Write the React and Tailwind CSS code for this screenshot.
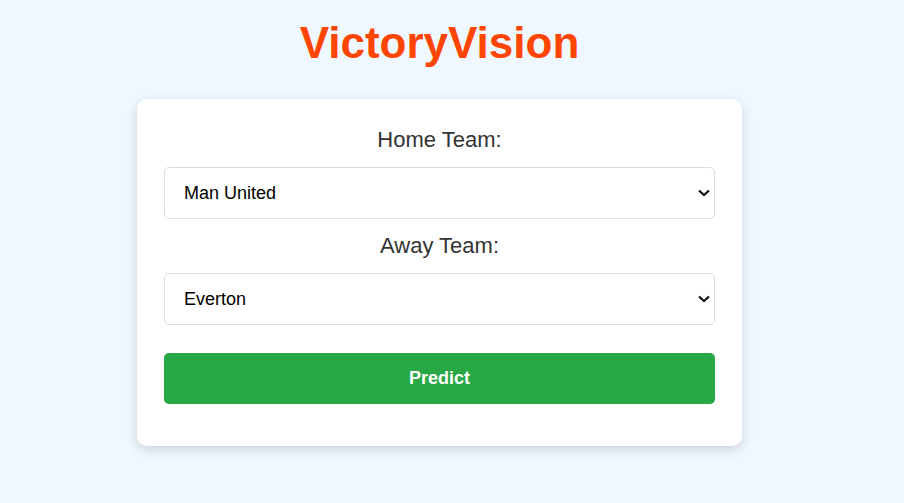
import React from "react";

const teams = ["Man United", "Everton", "Arsenal", "Chelsea", "Liverpool", "Man City", "Tottenham"];

const TeamSelect = ({ label, value }) => {
    return (
        <>
            <label className="block text-center text-[22px] leading-[24px] text-[#333] mb-[15px]">{label}</label>
            <div className="relative">
                <select
                    defaultValue={value}
                    className="appearance-none block w-full h-[52px] pl-[19px] pr-[30px] text-[18px] text-black bg-white border border-[#ddd] rounded-[5px]"
                >
                    {teams.map((t) => (
                        <option key={t} value={t}>{t}</option>
                    ))}
                </select>
                <svg className="absolute right-[5px] top-[22px] pointer-events-none" width="12" height="8" viewBox="0 0 12 8">
                    <path d="M1 1.5 L6 6 L11 1.5" fill="none" stroke="#111" strokeWidth="2.2" />
                </svg>
            </div>
        </>
    );
};

const App = () => {
    return (
        <div className="min-h-[503px] bg-[#f0f8ff] font-['Liberation_Sans',Arial,sans-serif] flex flex-col items-center pr-[25px] pt-[18px]">
            <h1 className="text-[44px] leading-[50px] font-bold text-[#ff4500]">VictoryVision</h1>
            <div className="mt-[31px] w-[605px] bg-white rounded-[10px] shadow-[0_4px_12px_rgba(0,0,0,0.15)] px-[27px] pt-[29px] pb-[42px]">
                <TeamSelect label="Home Team:" value="Man United" />
                <div className="h-[15px]" />
                <TeamSelect label="Away Team:" value="Everton" />
                <button className="mt-[28px] w-full h-[51px] bg-[#28a745] text-white text-[18px] font-bold rounded-[5px]">
                    Predict
                </button>
            </div>
        </div>
    );
};

export default App;
